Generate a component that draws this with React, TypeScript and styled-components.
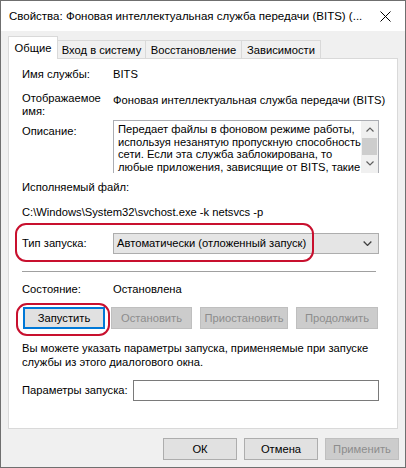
import React from "react";
import styled, { createGlobalStyle } from "styled-components";

const Global = createGlobalStyle`
  html, body { margin: 0; padding: 0; background: #3a3a3a; }
  body { font-family: "Liberation Sans", Arial, sans-serif; font-size: 11.2px; color: #000; }
  * { box-sizing: border-box; }
`;

const Window = styled.div`
  width: 406px;
  height: 468px;
  border: 1px solid #6f6f6f;
  background: #f0f0f0;
  display: flex;
  flex-direction: column;
`;

const TitleBar = styled.div`
  height: 30px;
  background: #fff;
  display: flex;
  align-items: center;
  padding-left: 8px;
  padding-right: 14px;
  line-height: 15px;
  font-size: 11.5px;
`;

const TitleText = styled.div`
  flex: 1;
  white-space: nowrap;
  overflow: hidden;
`;

const Body = styled.div`
  flex: 1;
  display: flex;
  flex-direction: column;
  padding: 5px 6px 0 7px;
`;

const TabRow = styled.div`
  display: flex;
  align-items: flex-end;
  height: 23px;
  position: relative;
  z-index: 1;
  margin-bottom: -1px;
`;

const Tab = styled.div<{ $active?: boolean; $w: number }>`
  width: ${(p) => p.$w}px;
  height: ${(p) => (p.$active ? 23 : 19)}px;
  background: ${(p) => (p.$active ? "#fff" : "#f0f0f0")};
  border: 1px solid #d9d9d9;
  border-bottom: ${(p) => (p.$active ? "none" : "1px solid #d9d9d9")};
  margin-left: ${(p) => (p.$active ? 0 : -1)}px;
  display: flex;
  align-items: center;
  justify-content: center;
  line-height: 15px;
  white-space: nowrap;
  padding-top: ${(p) => (p.$active ? 0 : 1)}px;
  z-index: ${(p) => (p.$active ? 2 : 1)};
`;

const Panel = styled.div`
  width: 390px;
  height: 371px;
  background: #fff;
  border: 1px solid #d9d9d9;
  padding: 8px 18px 0 13px;
  display: flex;
  flex-direction: column;
`;

const Field = styled.div<{ $mt?: number; $align?: string }>`
  display: grid;
  grid-template-columns: 91px 1fr;
  align-items: ${(p) => p.$align || "start"};
  margin-top: ${(p) => p.$mt || 0}px;
  line-height: 15px;
  position: relative;
`;

const Label = styled.div<{ $pt?: number }>`
  line-height: 13px;
  white-space: nowrap;
  padding-top: ${(p) => p.$pt || 0}px;
`;

const Value = styled.div<{ $pt?: number }>`
  white-space: nowrap;
  padding-top: ${(p) => p.$pt || 0}px;
`;

const Line = styled.div<{ $mt?: number; $lh?: number }>`
  margin-top: ${(p) => p.$mt || 0}px;
  line-height: ${(p) => p.$lh || 15}px;
  white-space: nowrap;
`;

const DescBox = styled.div`
  height: 53px;
  border: 1px solid #abadb3;
  border-bottom: none;
  display: flex;
  overflow: hidden;
`;

const DescText = styled.div`
  flex: 1;
  padding: 2px 0 0 4px;
  line-height: 12.7px;
  white-space: nowrap;
  overflow: hidden;
`;

const ScrollBar = styled.div`
  width: 17px;
  background: #f0f0f0;
  display: flex;
  flex-direction: column;
  align-items: center;
`;

const ScrollArrow = styled.div`
  height: 17px;
  width: 17px;
  display: flex;
  align-items: center;
  justify-content: center;
`;

const ScrollThumb = styled.div`
  width: 15px;
  height: 17px;
  background: #cdcdcd;
`;

const Combo = styled.div`
  height: 21px;
  background: #e5e5e5;
  border: 1px solid #adadad;
  display: flex;
  align-items: center;
  padding-left: 3px;
  padding-right: 6px;
`;

const ComboText = styled.div`
  flex: 1;
  white-space: nowrap;
`;

const Highlight = styled.div<{ $l: number; $t: number; $w: number; $h: number }>`
  position: absolute;
  left: ${(p) => p.$l}px;
  top: ${(p) => p.$t}px;
  width: ${(p) => p.$w}px;
  height: ${(p) => p.$h}px;
  border: 2.5px solid #c8102e;
  border-radius: 11px;
  pointer-events: none;
`;

const Separator = styled.div`
  height: 1px;
  background: #a0a0a0;
  margin-top: 17px;
  margin-right: 3px;
`;

const ButtonRow = styled.div`
  display: flex;
  margin-top: 10px;
  margin-left: 1px;
  position: relative;
`;

const Btn = styled.div<{ $w: number; $ml?: number; $disabled?: boolean; $focus?: boolean }>`
  width: ${(p) => p.$w}px;
  height: 22px;
  margin-left: ${(p) => p.$ml || 0}px;
  background: ${(p) => (p.$disabled ? "#cccccc" : "#e1e1e1")};
  border: ${(p) => (p.$focus ? "2px solid #0078d7" : p.$disabled ? "1px solid #bfbfbf" : "1px solid #adadad")};
  color: ${(p) => (p.$disabled ? "#8d8d8d" : "#000")};
  display: flex;
  align-items: center;
  justify-content: center;
  white-space: nowrap;
  line-height: 15px;
`;

const ParamRow = styled.div`
  display: grid;
  grid-template-columns: 111px 1fr;
  align-items: center;
  margin-top: 11px;
  line-height: 15px;
`;

const Input = styled.div`
  height: 21px;
  border: 1px solid #7a7a7a;
  background: #fff;
`;

const Footer = styled.div`
  display: flex;
  justify-content: flex-end;
  gap: 7px;
  margin-top: 9px;
`;

const Chevron = ({ dir, size = 8, color = "#606060" }: { dir: "up" | "down"; size?: number; color?: string }) => (
  <svg width={size} height={size / 2 + 1} viewBox="0 0 8 5" fill="none">
    {dir === "down" ? (
      <path d="M0.5 0.5 L4 4 L7.5 0.5" stroke={color} strokeWidth="1.2" />
    ) : (
      <path d="M0.5 4.5 L4 1 L7.5 4.5" stroke={color} strokeWidth="1.2" />
    )}
  </svg>
);

const CloseIcon = () => (
  <svg width="11" height="11" viewBox="0 0 11 11">
    <path d="M0.5 0.5 L10.5 10.5 M10.5 0.5 L0.5 10.5" stroke="#000" strokeWidth="1" />
  </svg>
);

export default function App() {
  return (
    <>
      <Global />
      <Window>
        <TitleBar>
          <TitleText>Свойства: Фоновая интеллектуальная служба передачи (BITS) (...</TitleText>
          <CloseIcon />
        </TitleBar>
        <Body>
          <TabRow>
            <Tab $active $w={50}>Общие</Tab>
            <Tab $w={89}>Вход в систему</Tab>
            <Tab $w={97}>Восстановление</Tab>
            <Tab $w={80}>Зависимости</Tab>
          </TabRow>
          <Panel>
            <Field>
              <Label $pt={1}>Имя службы:</Label>
              <Value>BITS</Value>
            </Field>
            <Field $mt={10}>
              <Label>
                Отображаемое
                <br />
                имя:
              </Label>
              <Value $pt={1}>Фоновая интеллектуальная служба передачи (BITS)</Value>
            </Field>
            <Field $mt={2}>
              <Label $pt={5}>Описание:</Label>
              <DescBox>
                <DescText>
                  Передает файлы в фоновом режиме работы,
                  <br />
                  используя незанятую пропускную способность
                  <br />
                  сети. Если эта служба заблокирована, то
                  <br />
                  любые приложения, зависящие от BITS, такие
                </DescText>
                <ScrollBar>
                  <ScrollArrow>
                    <Chevron dir="up" />
                  </ScrollArrow>
                  <ScrollThumb />
                  <ScrollArrow>
                    <Chevron dir="down" />
                  </ScrollArrow>
                </ScrollBar>
              </DescBox>
            </Field>
            <Line $mt={7}>Исполняемый файл:</Line>
            <Line $mt={10}>C:\Windows\System32\svchost.exe -k netsvcs -p</Line>
            <Field $mt={13} $align="center">
              <Label>Тип запуска:</Label>
              <Combo>
                <ComboText>Автоматически (отложенный запуск)</ComboText>
                <Chevron dir="down" size={9} color="#404040" />
              </Combo>
              <Highlight $l={-7} $t={-10} $w={299} $h={39} />
            </Field>
            <Separator />
            <Field $mt={10}>
              <Label $pt={1}>Состояние:</Label>
              <Value>Остановлена</Value>
            </Field>
            <ButtonRow>
              <Btn $w={82} $focus>Запустить</Btn>
              <Btn $w={81} $ml={6} $disabled>Остановить</Btn>
              <Btn $w={88} $ml={8} $disabled>Приостановить</Btn>
              <Btn $w={82} $ml={8} $disabled>Продолжить</Btn>
              <Highlight $l={-7} $t={-4} $w={94} $h={33} />
            </ButtonRow>
            <Line $mt={12} $lh={14}>
              Вы можете указать параметры запуска, применяемые при запуске
              <br />
              службы из этого диалогового окна.
            </Line>
            <ParamRow>
              <Label>Параметры запуска:</Label>
              <Input />
            </ParamRow>
          </Panel>
          <Footer>
            <Btn $w={74}>ОК</Btn>
            <Btn $w={74}>Отмена</Btn>
            <Btn $w={74} $disabled>Применить</Btn>
          </Footer>
        </Body>
      </Window>
    </>
  );
}
